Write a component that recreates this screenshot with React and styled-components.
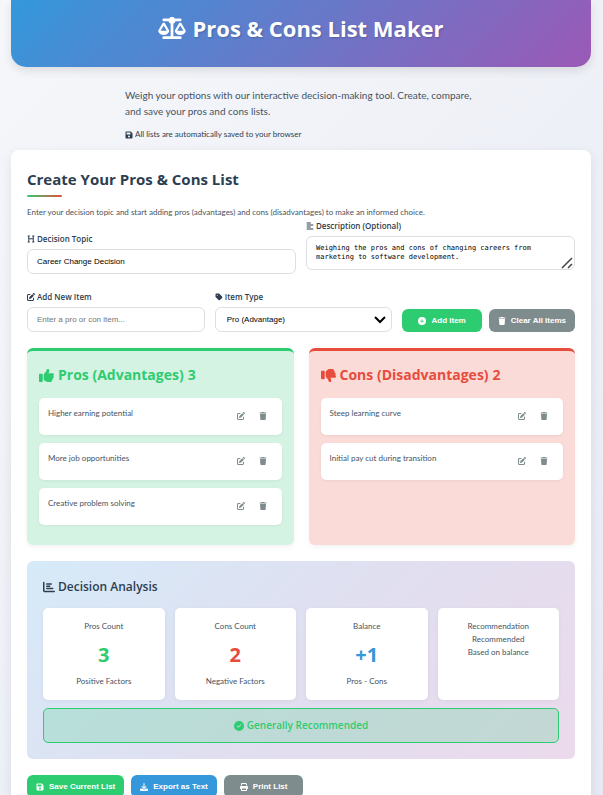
import React, { useState } from "react";
import styled, { createGlobalStyle } from "styled-components";
import {
  FaScaleBalanced,
  FaFloppyDisk,
  FaHeading,
  FaAlignLeft,
  FaPenToSquare,
  FaTag,
  FaCirclePlus,
  FaTrash,
  FaThumbsUp,
  FaThumbsDown,
  FaChartBar,
  FaCircleCheck,
  FaDownload,
  FaPrint,
} from "react-icons/fa6";

const headingFont = `"Segoe UI", "Open Sans", sans-serif`;
const controlFont = `"Liberation Sans", Arial, sans-serif`;

const GlobalStyle = createGlobalStyle`
  * {
    box-sizing: border-box;
    margin: 0;
    padding: 0;
  }

  body {
    min-height: 100vh;
    padding: 0 12px 20px 11px;
    background: linear-gradient(135deg, #f5f7fa 0%, #e6e9f3 100%);
    color: #46535f;
    font-family: "Segoe UI", Lato, sans-serif;
    font-size: 8px;
    line-height: 13px;
  }

  h1, h2, h3 {
    font-family: ${headingFont};
  }

  svg {
    flex-shrink: 0;
  }
`;

const Header = styled.header`
  display: flex;
  align-items: center;
  justify-content: center;
  gap: 6px;
  padding: 12px 16px 23px;
  border-radius: 0 0 15px 15px;
  background: linear-gradient(135deg, #3498db 0%, #9b59b6 100%);
  box-shadow: 0 4px 10px rgba(0, 0, 0, 0.1);
  color: #fff;
  line-height: 32px;
  text-shadow: 1px 1px 2px rgba(0, 0, 0, 0.2);

  h1 {
    font-size: 22px;
    font-weight: 700;
  }

  svg {
    width: 28px;
    height: 22px;
  }
`;

const Intro = styled.div`
  max-width: 352px;
  margin: 0 auto;
  padding: 20px 0 9px;
  font-size: 10px;
  line-height: 16px;
`;

const SavedNote = styled.p`
  display: flex;
  align-items: center;
  gap: 2px;
  margin-top: 9px;
  color: #2c3e50;
  font-size: 8px;
  line-height: 13px;
`;

const Card = styled.main`
  padding: 16px;
  border-radius: 8px;
  background: #fff;
  box-shadow: 0 3px 12px rgba(0, 0, 0, 0.08);
`;

const CardTitle = styled.h2`
  color: #2c3e50;
  font-size: 15px;
  font-weight: 700;
  line-height: 26px;

  &::after {
    content: "";
    display: block;
    width: 35px;
    height: 2px;
    margin-top: 3px;
    border-radius: 2px;
    background: linear-gradient(90deg, #2ecc71, #e74c3c);
  }
`;

const Lead = styled.p`
  margin-top: 9px;
`;

const FormRow = styled.div`
  display: grid;
  grid-template-columns: ${({ $columns }) => $columns};
  align-items: end;
  gap: 10px;
  margin-bottom: 16px;
`;

const Field = styled.div`
  display: flex;
  flex-direction: column;
  gap: 4px;
  padding-bottom: ${({ $lifted }) => ($lifted ? "4px" : "0")};
`;

const Label = styled.label`
  display: flex;
  align-items: center;
  gap: 2px;
  color: #2c3e50;
  font-family: ${headingFont};
  font-weight: 600;
`;

const controlBox = `
  width: 100%;
  border: 1px solid #dcdfe3;
  border-radius: 6px;
  background: #fff;
  color: #000;
  font-size: 8px;
`;

const Input = styled.input`
  ${controlBox}
  height: 25px;
  padding: 0 9px;
  font-family: ${controlFont};

  &::placeholder {
    color: #757575;
  }
`;

const TextArea = styled.textarea`
  ${controlBox}
  display: block;
  height: 34px;
  padding: 7px 9px;
  font-family: Consolas, "DejaVu Sans Mono", monospace;
  font-size: 7px;
  line-height: 9px;
  resize: none;
`;

const TextAreaWrap = styled.div`
  position: relative;

  svg {
    position: absolute;
    right: 2px;
    bottom: 1px;
    pointer-events: none;
  }
`;

const SelectWrap = styled.div`
  position: relative;

  svg {
    position: absolute;
    top: 9px;
    right: 6px;
    pointer-events: none;
  }
`;

const Select = styled.select`
  ${controlBox}
  display: block;
  height: 25px;
  padding: 0 11px;
  appearance: none;
  font-family: ${controlFont};
`;

const ButtonRow = styled.div`
  display: flex;
  gap: 7px;
`;

const tones = {
  green: "#2ecc71",
  blue: "#3498db",
  gray: "#7f8c8d",
};

const Button = styled.button`
  display: inline-flex;
  align-items: center;
  justify-content: center;
  gap: 5px;
  height: 23px;
  padding: 0 ${({ $wide }) => ($wide ? "16px" : "9px")};
  border: none;
  border-radius: 6px;
  background: ${({ $tone }) => tones[$tone]};
  color: #fff;
  font-family: ${controlFont};
  font-size: 8px;
  font-weight: 700;
  white-space: nowrap;
  cursor: pointer;
`;

const Lists = styled.div`
  display: grid;
  grid-template-columns: 1fr 1fr;
  gap: 15px;
  margin-bottom: 16px;
`;

const ListPanel = styled.section`
  padding: 12px 12px 20px;
  border-top: 3px solid ${({ $accent }) => $accent};
  border-radius: 6px;
  background: ${({ $fill }) => $fill};
  box-shadow: 0 2px 5px rgba(0, 0, 0, 0.05);
`;

const ListTitle = styled.h3`
  display: flex;
  align-items: center;
  gap: 4px;
  margin-bottom: 11px;
  color: ${({ $accent }) => $accent};
  font-size: 14px;
  font-weight: 700;
  line-height: 24px;

  svg {
    width: 15px;
    height: 15px;
  }
`;

const Items = styled.ul`
  display: flex;
  flex-direction: column;
  gap: 8px;
  list-style: none;
`;

const Item = styled.li`
  display: flex;
  align-items: center;
  justify-content: space-between;
  height: 37px;
  padding: 0 10px 2px 9px;
  border-radius: 5px;
  background: #fff;
  box-shadow: 0 1px 3px rgba(0, 0, 0, 0.06);

  > span {
    padding-bottom: 4px;
  }
`;

const ItemActions = styled.div`
  display: flex;
  gap: 4px;
`;

const IconButton = styled.button`
  display: flex;
  align-items: center;
  justify-content: center;
  width: 18px;
  height: 18px;
  border: none;
  background: none;
  color: #7f8c8d;
  font-size: 8px;
  cursor: pointer;
`;

const Analysis = styled.section`
  margin-bottom: 16px;
  padding: 16px;
  border-radius: 6px;
  background: linear-gradient(135deg, #d6eaf8 0%, #e0dff0 50%, #ebdaec 100%);
`;

const AnalysisTitle = styled.h3`
  display: flex;
  align-items: center;
  gap: 3px;
  margin-bottom: 11px;
  color: #2c3e50;
  font-size: 12px;
  font-weight: 600;
  line-height: 20px;
`;

const Stats = styled.div`
  display: grid;
  grid-template-columns: repeat(4, minmax(0, 1fr));
  gap: 10px;
  margin-bottom: 8px;
`;

const Stat = styled.div`
  min-height: 92px;
  padding: 12px 4px;
  border-radius: 5px;
  background: #fff;
  box-shadow: 0 1px 4px rgba(0, 0, 0, 0.05);
  text-align: center;
`;

const StatValue = styled.div`
  margin: 6px 0 4px;
  color: ${({ $color }) => $color};
  font-family: ${headingFont};
  font-size: 20px;
  font-weight: 700;
  line-height: 32px;
`;

const Verdict = styled.div`
  display: flex;
  align-items: center;
  justify-content: center;
  gap: 3px;
  height: 35px;
  border: 1px solid #2ecc71;
  border-radius: 5px;
  background: rgba(46, 204, 113, 0.2);
  color: #2ecc71;
  font-family: ${headingFont};
  font-size: 10px;
  font-weight: 600;
`;

const startingItems = [
  { id: 1, type: "pro", text: "Higher earning potential" },
  { id: 2, type: "pro", text: "More job opportunities" },
  { id: 3, type: "pro", text: "Creative problem solving" },
  { id: 4, type: "con", text: "Steep learning curve" },
  { id: 5, type: "con", text: "Initial pay cut during transition" },
];

const ItemList = ({ items, onEdit, onRemove }) => (
  <Items>
    {items.map((item) => (
      <Item key={item.id}>
        <span>{item.text}</span>
        <ItemActions>
          <IconButton type="button" aria-label="Edit" onClick={() => onEdit(item)}>
            <FaPenToSquare />
          </IconButton>
          <IconButton type="button" aria-label="Delete" onClick={() => onRemove(item.id)}>
            <FaTrash />
          </IconButton>
        </ItemActions>
      </Item>
    ))}
  </Items>
);

const App = () => {
  const [topic, setTopic] = useState("Career Change Decision");
  const [description, setDescription] = useState(
    "Weighing the pros and cons of changing careers from\nmarketing to software development."
  );
  const [draft, setDraft] = useState("");
  const [type, setType] = useState("pro");
  const [items, setItems] = useState(startingItems);

  const pros = items.filter((item) => item.type === "pro");
  const cons = items.filter((item) => item.type === "con");
  const balance = pros.length - cons.length;
  const recommended = balance > 0;

  const addItem = () => {
    if (!draft.trim()) return;
    setItems([...items, { id: Date.now(), type, text: draft.trim() }]);
    setDraft("");
  };

  const removeItem = (id) => setItems(items.filter((item) => item.id !== id));

  const editItem = (item) => {
    setDraft(item.text);
    setType(item.type);
    removeItem(item.id);
  };

  return (
    <>
      <GlobalStyle />
      <Header>
        <FaScaleBalanced />
        <h1>Pros & Cons List Maker</h1>
      </Header>

      <Intro>
        <p>
          Weigh your options with our interactive decision-making tool. Create, compare, and save
          your pros and cons lists.
        </p>
        <SavedNote>
          <FaFloppyDisk />
          All lists are automatically saved to your browser
        </SavedNote>
      </Intro>

      <Card>
        <CardTitle>Create Your Pros & Cons List</CardTitle>
        <Lead>
          Enter your decision topic and start adding pros (advantages) and cons (disadvantages) to
          make an informed choice.
        </Lead>

        <FormRow $columns="repeat(2, minmax(0, 1fr))">
          <Field>
            <Label htmlFor="topic">
              <FaHeading />
              Decision Topic
            </Label>
            <Input id="topic" value={topic} onChange={(e) => setTopic(e.target.value)} />
          </Field>
          <Field $lifted>
            <Label htmlFor="description">
              <FaAlignLeft />
              Description (Optional)
            </Label>
            <TextAreaWrap>
              <TextArea
                id="description"
                value={description}
                onChange={(e) => setDescription(e.target.value)}
              />
              <svg width="12" height="12" viewBox="0 0 12 12" stroke="#444" strokeWidth="1.5">
                <path d="M1 11L11 1M7 11L11 7" />
              </svg>
            </TextAreaWrap>
          </Field>
        </FormRow>

        <FormRow $columns="minmax(0, 1fr) minmax(0, 1fr) auto">
          <Field>
            <Label htmlFor="new-item">
              <FaPenToSquare />
              Add New Item
            </Label>
            <Input
              id="new-item"
              placeholder="Enter a pro or con item..."
              value={draft}
              onChange={(e) => setDraft(e.target.value)}
            />
          </Field>
          <Field>
            <Label htmlFor="item-type">
              <FaTag />
              Item Type
            </Label>
            <SelectWrap>
              <Select id="item-type" value={type} onChange={(e) => setType(e.target.value)}>
                <option value="pro">Pro (Advantage)</option>
                <option value="con">Con (Disadvantage)</option>
              </Select>
              <svg width="12" height="8" viewBox="0 0 12 8" fill="none" stroke="#000" strokeWidth="2">
                <path d="M1 1L6 6L11 1" />
              </svg>
            </SelectWrap>
          </Field>
          <ButtonRow>
            <Button type="button" $tone="green" $wide onClick={addItem}>
              <FaCirclePlus />
              Add Item
            </Button>
            <Button type="button" $tone="gray" onClick={() => setItems([])}>
              <FaTrash />
              Clear All Items
            </Button>
          </ButtonRow>
        </FormRow>

        <Lists>
          <ListPanel $accent="#2ecc71" $fill="#d5f3e2">
            <ListTitle $accent="#2ecc71">
              <FaThumbsUp />
              Pros (Advantages) <span>{pros.length}</span>
            </ListTitle>
            <ItemList items={pros} onEdit={editItem} onRemove={removeItem} />
          </ListPanel>
          <ListPanel $accent="#e74c3c" $fill="#fadbd8">
            <ListTitle $accent="#e74c3c">
              <FaThumbsDown />
              Cons (Disadvantages) <span>{cons.length}</span>
            </ListTitle>
            <ItemList items={cons} onEdit={editItem} onRemove={removeItem} />
          </ListPanel>
        </Lists>

        <Analysis>
          <AnalysisTitle>
            <FaChartBar />
            Decision Analysis
          </AnalysisTitle>
          <Stats>
            <Stat>
              Pros Count
              <StatValue $color="#2ecc71">{pros.length}</StatValue>
              Positive Factors
            </Stat>
            <Stat>
              Cons Count
              <StatValue $color="#e74c3c">{cons.length}</StatValue>
              Negative Factors
            </Stat>
            <Stat>
              Balance
              <StatValue $color="#3498db">{balance > 0 ? `+${balance}` : balance}</StatValue>
              Pros - Cons
            </Stat>
            <Stat>
              <p>Recommendation</p>
              <p>{recommended ? "Recommended" : "Not Recommended"}</p>
              <p>Based on balance</p>
            </Stat>
          </Stats>
          <Verdict>
            <FaCircleCheck />
            {recommended ? "Generally Recommended" : "Not Recommended"}
          </Verdict>
        </Analysis>

        <ButtonRow>
          <Button type="button" $tone="green">
            <FaFloppyDisk />
            Save Current List
          </Button>
          <Button type="button" $tone="blue">
            <FaDownload />
            Export as Text
          </Button>
          <Button type="button" $tone="gray" $wide onClick={() => window.print()}>
            <FaPrint />
            Print List
          </Button>
        </ButtonRow>
      </Card>
    </>
  );
};

export default App;
